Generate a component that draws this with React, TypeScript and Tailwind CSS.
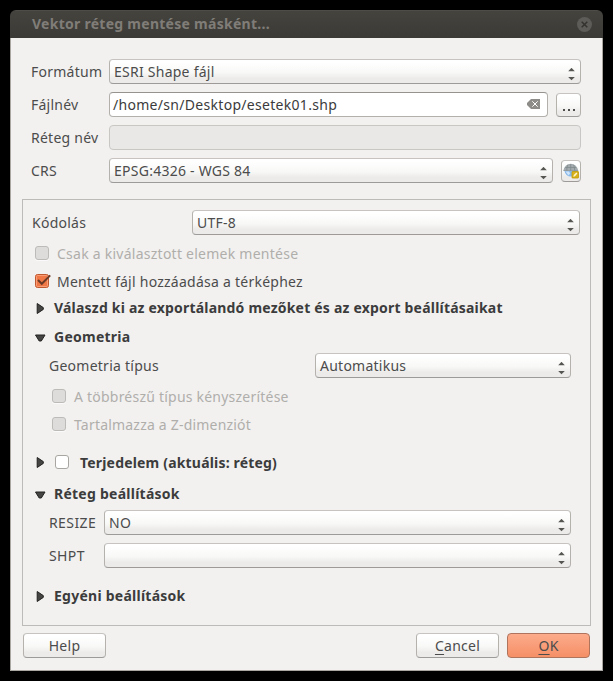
import type { ReactNode } from "react";

function Arrows() {
  return (
    <svg width="7" height="13" viewBox="0 0 7 13" className="mt-[5px] shrink-0" fill="#555552">
      <path d="M3.5 -0.2 6.8 3.2H0.2Z" />
      <path d="M0.2 8.9H6.8L3.5 12.3Z" />
    </svg>
  );
}

function Combo({ className, children }: { className: string; children?: ReactNode }) {
  return (
    <div
      className={`flex h-[25px] items-center justify-between rounded-[4px] border border-[#b5b2ae] border-t-[#c6c3c0] border-b-[#9d9a97] bg-linear-to-b from-white from-10% via-[#f8f8f7] via-55% to-[#ecebea] to-80% pr-[5px] pl-1 ${className}`}
    >
      <span>{children}</span>
      <Arrows />
    </div>
  );
}

function Triangle({ open = false }: { open?: boolean }) {
  return (
    <svg width="12" height="12" viewBox="0 0 12 12" className="-mr-px shrink-0" fill="#454543" stroke="#222220" strokeWidth="1" strokeLinejoin="round">
      {open ? <path d="M0.5 4H10L6.3 10H4.2Z" /> : <path d="M2.2 1.5V11.5L8.3 7.4V5.6Z" />}
    </svg>
  );
}

function Check({ state }: { state: "disabled" | "on" | "off" }) {
  if (state === "on") {
    return (
      <svg width="17" height="16" viewBox="0 0 17 16" className="-mr-[3px] shrink-0">
        <rect x="0.5" y="1.5" width="13" height="13" rx="2" fill="#f07746" stroke="#c0582f" />
        <rect x="1.5" y="2.5" width="11" height="11" rx="1" fill="none" stroke="#f99d76" />
        <path d="M3 7 6.8 10.8 15.2 2.4" fill="none" stroke="#6b3a26" strokeWidth="2" />
      </svg>
    );
  }
  return (
    <div
      className={`size-[14px] shrink-0 rounded-[3px] border ${
        state === "disabled" ? "border-[#bdbbb8] bg-[#dddcda] shadow-[0_1px_0_#fafafa]" : "border-[#a9a6a2] bg-white"
      }`}
    />
  );
}

function Button({ className, children }: { className: string; children: ReactNode }) {
  return (
    <button className={`flex h-[25px] w-[83px] items-center justify-center rounded-[4px] border ${className}`}>
      <span>{children}</span>
    </button>
  );
}

const plain =
  "border-[#b5b2ae] border-t-[#c6c3c0] border-b-[#9d9a97] bg-linear-to-b from-white from-10% via-[#f8f8f7] via-55% to-[#ecebea] to-80%";

export default function App() {
  return (
    <div className="h-[681px] w-[613px] bg-black p-[10px] font-['Noto_Sans',sans-serif] text-[14px] leading-5 tracking-[0.25px] whitespace-nowrap text-[#4c4c4c]">
      <div className="flex h-[661px] w-[593px] flex-col overflow-hidden rounded-t-[6px]">
        <header className="flex h-7 shrink-0 items-center justify-between border-t border-[#4d4c47] bg-linear-to-b from-[#44433e] to-[#3b3a36] pr-[11px] pb-px pl-[22px] font-bold text-[#807d78]">
          <span className="tracking-[0.27px]">Vektor réteg mentése másként...</span>
          <svg width="15" height="15" viewBox="0 0 15 15" className="mt-px">
            <circle cx="7.5" cy="7.5" r="7.5" fill="#5e5c58" />
            <path d="M4.7 4.7 10.3 10.3M10.3 4.7 4.7 10.3" stroke="#33322f" strokeWidth="1.5" />
          </svg>
        </header>

        <main className="flex flex-1 flex-col border-x border-b border-[#aaa7a3] bg-[#f2f1f0] px-[11px] pt-[21px]">
          <div className="flex flex-col gap-2 pr-[10px] pl-[9px]">
            <div className="flex h-[25px] items-center">
              <span className="w-[78px]">Formátum</span>
              <Combo className="w-[472px]">ESRI Shape fájl</Combo>
            </div>
            <div className="flex h-[25px] items-center">
              <span className="w-[78px]">Fájlnév</span>
              <div className="flex h-[25px] w-[439px] items-center justify-between rounded-[4px] border border-[#b3b0ac] border-t-[#96938f] bg-white pr-[7px] pl-[3px] text-[#3b3b3b]">
                <span className="tracking-[0.3px]">/home/sn/Desktop/esetek01.shp</span>
                <svg width="13" height="10" viewBox="0 0 13 10" className="-mt-[2px]">
                  <path d="M4 0H13V10H4L0 6V4Z" fill="#8d8c89" />
                  <path d="M5.3 2.3 10.7 7.7M10.7 2.3 5.3 7.7" stroke="#fff" strokeWidth="1" />
                </svg>
              </div>
              <button className={`ml-2 flex h-6 w-[25px] items-end justify-center gap-[3px] rounded-[4px] border pb-[5px] ${plain}`}>
                <i className="size-[2px] bg-[#4c4c4c]" />
                <i className="size-[2px] bg-[#4c4c4c]" />
                <i className="size-[2px] bg-[#4c4c4c]" />
              </button>
            </div>
            <div className="flex h-[25px] items-center">
              <span className="w-[78px]">Réteg név</span>
              <div className="h-[25px] w-[472px] rounded-[4px] border border-[#c9c7c4] bg-[#e9e8e7]" />
            </div>
            <div className="flex h-[25px] items-center">
              <span className="w-[78px]">CRS</span>
              <Combo className="w-[444px]">EPSG:4326 - WGS 84</Combo>
              <button className={`ml-2 flex h-[22px] w-5 items-center justify-center rounded-[4px] border ${plain}`}>
                <svg width="16" height="16" viewBox="0 0 16 16" className="shrink-0">
                  <path d="M0.4 7.5Q2 1 7.7 0.8Q13.5 1 15.2 7.5Z" fill="#a3abaf" />
                  <path d="M1.5 8A6.3 6.3 0 0 0 14 8Z" fill="#86b8ea" />
                  <path d="M2.5 8.5H6L7.2 10.5 5.5 12.5Z" fill="#cfe5fa" />
                  <path d="M0.4 7.5H15.2M2.2 4.5H13.2M7.7 1V7.5M4.8 1.8Q3.6 4.5 3.8 7.5M10.6 1.8Q11.8 4.5 11.6 7.5" fill="none" stroke="#7b868a" strokeWidth="0.7" />
                  <rect x="9" y="8.5" width="6.5" height="6.5" rx="0.5" fill="#dab21a" stroke="#c29a08" strokeWidth="0.8" />
                  <path d="M10.3 13.8 10.8 12 13.3 9.5 14.4 10.6 12 13.2Z" fill="#fff6cd" />
                </svg>
              </button>
            </div>
          </div>

          <section className="mt-4 flex h-[427px] flex-col border border-[#bdbbb8]">
            <div className="mt-[10px] flex h-[25px] items-center pl-[9px]">
              <span className="w-[160px]">Kódolás</span>
              <Combo className="w-[388px]">UTF-8</Combo>
            </div>
            <div className="mt-1 flex h-7 items-center gap-2 pl-3 text-[#b0aeab]">
              <Check state="disabled" />
              <span className="pt-px">Csak a kiválasztott elemek mentése</span>
            </div>
            <div className="flex h-7 items-center gap-2 pl-3">
              <Check state="on" />
              <span className="pt-px">Mentett fájl hozzáadása a térképhez</span>
            </div>
            <div className="flex h-[26px] items-center gap-[8px] pl-3 font-bold tracking-[0.2px] text-[#3c3c3c]">
              <Triangle />
              <span>Válaszd ki az exportálandó mezőket és az export beállításaikat</span>
            </div>
            <div className="flex h-8 items-center gap-[8px] pl-3 font-bold text-[#3c3c3c]">
              <Triangle open />
              <span>Geometria</span>
            </div>
            <div className="flex h-[25px] items-center pl-[26px]">
              <span className="w-[266px]">Geometria típus</span>
              <Combo className="w-[256px]">Automatikus</Combo>
            </div>
            <div className="mt-1 flex h-7 items-center gap-2 pl-[29px] tracking-[0.22px] text-[#b0aeab]">
              <Check state="disabled" />
              <span className="pt-px">A többrészű típus kényszerítése</span>
            </div>
            <div className="flex h-7 items-center gap-2 pl-[29px] tracking-[0.2px] text-[#b0aeab]">
              <Check state="disabled" />
              <span className="pt-px">Tartalmazza a Z-dimenziót</span>
            </div>
            <div className="mt-[10px] flex h-7 items-center pl-3 font-bold tracking-[0.18px] text-[#3c3c3c]">
              <Triangle />
              <span className="mr-[11px] ml-[9px]"><Check state="off" /></span>
              <span className="pt-px">Terjedelem (aktuális: réteg)</span>
            </div>
            <div className="mt-[2px] flex h-8 items-center gap-[8px] pl-3 font-bold text-[#3c3c3c]">
              <Triangle open />
              <span>Réteg beállítások</span>
            </div>
            <div className="flex h-[25px] items-center pl-[26px]">
              <span className="w-[55px] tracking-[0.4px]">RESIZE</span>
              <Combo className="w-[467px]">NO</Combo>
            </div>
            <div className="mt-2 flex h-[25px] items-center pl-[26px]">
              <span className="w-[55px] tracking-[0.4px]">SHPT</span>
              <Combo className="w-[467px]" />
            </div>
            <div className="mt-[15px] flex h-[26px] items-center gap-[8px] pl-3 font-bold text-[#3c3c3c]">
              <Triangle />
              <span>Egyéni beállítások</span>
            </div>
          </section>

          <footer className="mt-[7px] flex gap-2 pr-px pl-px">
            <Button className={`mr-auto ${plain}`}>Help</Button>
            <Button className={plain}>
              <u className="underline-offset-[3px]">C</u>ancel
            </Button>
            <Button className="border-[#b0745c] bg-linear-to-b from-[#fcab8b] to-[#f58f66]">
              <u className="underline-offset-[3px]">O</u>K
            </Button>
          </footer>
        </main>
      </div>
    </div>
  );
}
